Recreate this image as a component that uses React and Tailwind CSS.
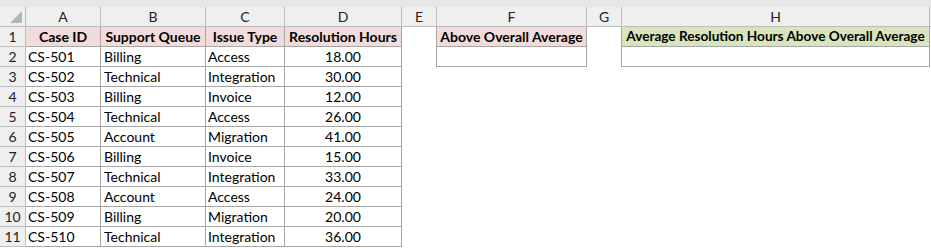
import React from "react";

const rows = [
  ["CS-501", "Billing", "Access", "18.00"],
  ["CS-502", "Technical", "Integration", "30.00"],
  ["CS-503", "Billing", "Invoice", "12.00"],
  ["CS-504", "Technical", "Access", "26.00"],
  ["CS-505", "Account", "Migration", "41.00"],
  ["CS-506", "Billing", "Invoice", "15.00"],
  ["CS-507", "Technical", "Integration", "33.00"],
  ["CS-508", "Account", "Access", "24.00"],
  ["CS-509", "Billing", "Migration", "20.00"],
  ["CS-510", "Technical", "Integration", "36.00"],
];

const cols = ["A", "B", "C", "D", "E", "F", "G", "H"];

export default function App() {
  const font = { fontFamily: "Lato, 'Open Sans', 'Liberation Sans', sans-serif" };
  return (
    <div className="w-[931px] h-[248px] bg-white overflow-hidden text-[14px] text-black" style={font}>
      <div className="h-[7px] bg-[#e6e6e6]" />
      <div className="grid grid-cols-[26px_75px_105px_79px_117px_35px_150px_35px_308px_1fr]">
        {/* column header row */}
        <div className="h-[20px] bg-[#efefef] border-r border-b border-[#bdbdbd] relative">
          <div className="absolute right-[3px] bottom-[3px] w-0 h-0 border-l-[12px] border-l-transparent border-b-[12px] border-b-[#b4b4b4]" />
        </div>
        {cols.map((c) => (
          <div key={c} className="h-[20px] bg-[#efefef] border-r border-b border-[#bdbdbd] flex items-center justify-center text-[#222] leading-none">
            {c}
          </div>
        ))}
        <div className="h-[20px] bg-[#efefef] border-b border-[#bdbdbd]" />

        {/* row 1 */}
        <div className="h-[20px] bg-[#efefef] border-r border-b border-[#bdbdbd] flex items-center justify-center text-[#222] leading-none">1</div>
        {["Case ID", "Support Queue", "Issue Type", "Resolution Hours"].map((h) => (
          <div key={h} className="h-[20px] bg-[#f2dcdb] border-r border-b border-[#a6a6a6] flex items-center justify-center font-bold leading-none whitespace-nowrap">
            {h}
          </div>
        ))}
        <div className="h-[20px] border-r border-[#a6a6a6]" />
        <div className="h-[20px] bg-[#f2dcdb] border-r border-b border-[#a6a6a6] flex items-center justify-center font-bold leading-none whitespace-nowrap">Above Overall Average</div>
        <div className="h-[20px] border-r border-[#a6a6a6]" />
        <div className="h-[20px] bg-[#d8e4bc] border-r border-b border-[#a6a6a6] flex items-center justify-center font-bold leading-none whitespace-nowrap text-[13.6px]">Average Resolution Hours Above Overall Average</div>
        <div className="h-[20px]" />

        {rows.map((r, i) => (
          <React.Fragment key={r[0]}>
            <div className="h-[20px] bg-[#efefef] border-r border-b border-[#bdbdbd] flex items-center justify-center text-[#222] leading-none">{i + 2}</div>
            <div className="h-[20px] border-r border-b border-[#a6a6a6] flex items-center pl-[2px] leading-none whitespace-nowrap">{r[0]}</div>
            <div className="h-[20px] border-r border-b border-[#a6a6a6] flex items-center pl-[3px] leading-none whitespace-nowrap">{r[1]}</div>
            <div className="h-[20px] border-r border-b border-[#a6a6a6] flex items-center pl-[2px] leading-none whitespace-nowrap">{r[2]}</div>
            <div className="h-[20px] border-r border-b border-[#a6a6a6] flex items-center justify-center leading-none">{r[3]}</div>
            <div className={i === 0 ? "h-[20px] border-r border-[#a6a6a6]" : "h-[20px]"} />
            <div className={i === 0 ? "h-[20px] border-r border-b border-[#a6a6a6]" : "h-[20px]"} />
            <div className={i === 0 ? "h-[20px] border-r border-[#a6a6a6]" : "h-[20px]"} />
            <div className={i === 0 ? "h-[20px] border-r border-b border-[#a6a6a6]" : "h-[20px]"} />
            <div className="h-[20px]" />
          </React.Fragment>
        ))}
      </div>
    </div>
  );
}
